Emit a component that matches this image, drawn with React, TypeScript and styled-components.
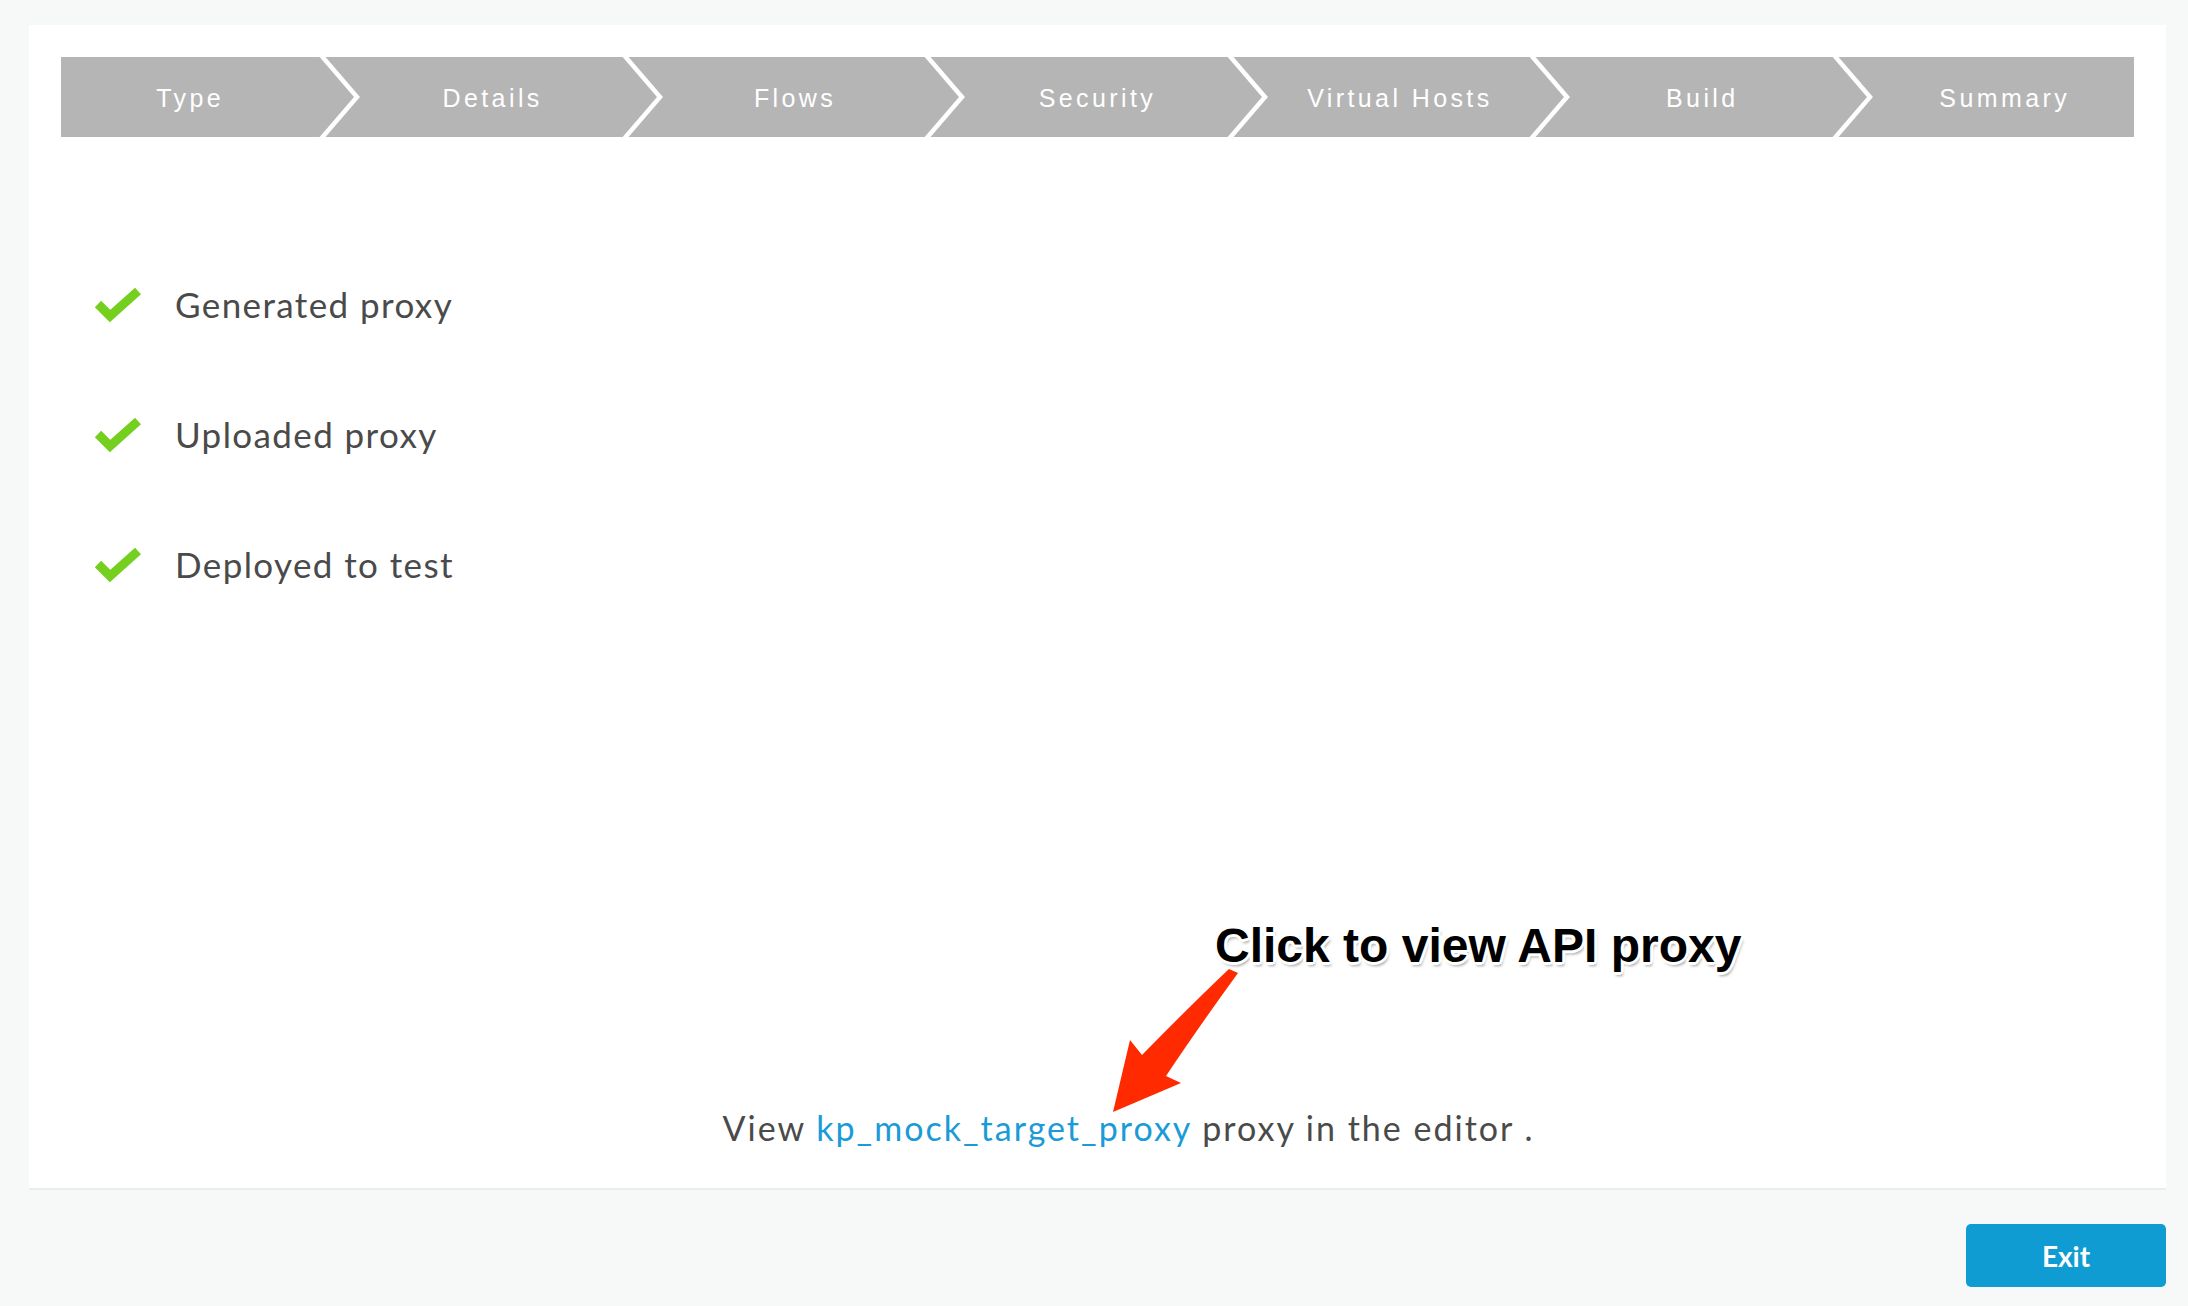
import styled, { createGlobalStyle } from "styled-components";

const GlobalStyle = createGlobalStyle`
    html, body {
        margin: 0;
        padding: 0;
        background: #f7f8f8;
    }
    body {
        font-family: Lato, "Open Sans", sans-serif;
        color: #4a4a4a;
    }
    * {
        box-sizing: border-box;
    }
`;

const Page = styled.div`
    width: 2188px;
    height: 1306px;
    padding: 25px 22px 0 29px;
    display: flex;
    flex-direction: column;
`;

const Panel = styled.section`
    position: relative;
    height: 1165px;
    background: #ffffff;
    border-bottom: 2px solid #ececec;
    padding: 32px 32px 0;
    display: flex;
    flex-direction: column;
`;

const Stepper = styled.ol`
    display: flex;
    height: 80px;
    margin: 0;
    padding: 0;
    list-style: none;
    background: #b5b5b5;
`;

const Step = styled.li`
    flex: 1;
    display: flex;
    align-items: center;
    justify-content: center;
    padding-top: 2px;
    font-family: "Liberation Sans", Arial, sans-serif;
    font-size: 25px;
    letter-spacing: 3.4px;
    color: #ffffff;
    white-space: nowrap;
`;

const Separator = styled.li`
    width: 44px;
    flex: none;
    display: flex;
    svg {
        display: block;
    }
`;

const StatusList = styled.ul`
    margin: 142px 0 0;
    padding: 0 0 0 33px;
    list-style: none;
    display: flex;
    flex-direction: column;
    gap: 80px;
`;

const StatusRow = styled.li`
    display: flex;
    align-items: center;
    height: 50px;
    gap: 33px;
    font-size: 35px;
    letter-spacing: 1.4px;
    color: #4a4a4a;
`;

const Spacer = styled.div`
    flex: 1;
`;

const EditorLine = styled.p`
    margin: 0 0 40px;
    padding-left: 62px;
    text-align: center;
    font-size: 34px;
    line-height: 40px;
    letter-spacing: 2px;
    color: #4a4a4a;
    a {
        color: #1a9bd7;
        text-decoration: none;
    }
`;

const Callout = styled.div`
    position: absolute;
    left: 1186px;
    top: 897px;
    font-family: "Liberation Sans", Arial, sans-serif;
    font-weight: 700;
    font-size: 48px;
    line-height: 48px;
    color: #000000;
    white-space: nowrap;
    text-shadow:
        -2px -2px 0 #fff, 2px -2px 0 #fff, -2px 2px 0 #fff, 2px 2px 0 #fff,
        0 -3px 0 #fff, 0 3px 0 #fff, -3px 0 0 #fff, 3px 0 0 #fff,
        2px 4px 3px rgba(0, 0, 0, 0.35);
`;

const Arrow = styled.svg`
    position: absolute;
    left: 1071px;
    top: 935px;
    overflow: visible;
`;

const Footer = styled.footer`
    display: flex;
    justify-content: flex-end;
    padding-top: 34px;
`;

const ExitButton = styled.button`
    width: 200px;
    height: 63px;
    border: none;
    border-radius: 5px;
    background: #0e9cd3;
    color: #ffffff;
    font-family: Lato, sans-serif;
    font-weight: 700;
    font-size: 28px;
    cursor: pointer;
`;

const steps = ["Type", "Details", "Flows", "Security", "Virtual Hosts", "Build", "Summary"];
const statuses = ["Generated proxy", "Uploaded proxy", "Deployed to test"];

function Chevron() {
    return (
        <svg width="44" height="80" viewBox="0 0 44 80">
            <polyline points="1,-3 38,40 1,83" fill="none" stroke="#ffffff" strokeWidth="4.5" strokeLinejoin="miter" />
        </svg>
    );
}

function CheckMark() {
    return (
        <svg width="48" height="38" viewBox="0 0 48 38">
            <polyline points="4,19 16,31 44,6" fill="none" stroke="#74cf1f" strokeWidth="9" strokeLinejoin="miter" />
        </svg>
    );
}

function App() {
    return (
        <Page>
            <GlobalStyle />
            <Panel>
                <Stepper>
                    {steps.flatMap((step, i) => {
                        const items = [<Step key={step}>{step}</Step>];
                        if (i < steps.length - 1) {
                            items.push(
                                <Separator key={step + "-sep"}>
                                    <Chevron />
                                </Separator>
                            );
                        }
                        return items;
                    })}
                </Stepper>

                <StatusList>
                    {statuses.map((s) => (
                        <StatusRow key={s}>
                            <CheckMark />
                            {s}
                        </StatusRow>
                    ))}
                </StatusList>

                <Spacer />

                <EditorLine>
                    View <a href="#">kp_mock_target_proxy</a> proxy in the editor .
                </EditorLine>

                <Callout>Click to view API proxy</Callout>
                <Arrow width="150" height="160" viewBox="0 0 150 160">
                    <path
                        d="M129,9 L138,13 Q98,68 66,116 L81,123 L13,152 L30,80 L42,95 Q92,44 129,9 Z"
                        fill="#ff2a00"
                    />
                </Arrow>
            </Panel>
            <Footer>
                <ExitButton>Exit</ExitButton>
            </Footer>
        </Page>
    );
}

export default App;
